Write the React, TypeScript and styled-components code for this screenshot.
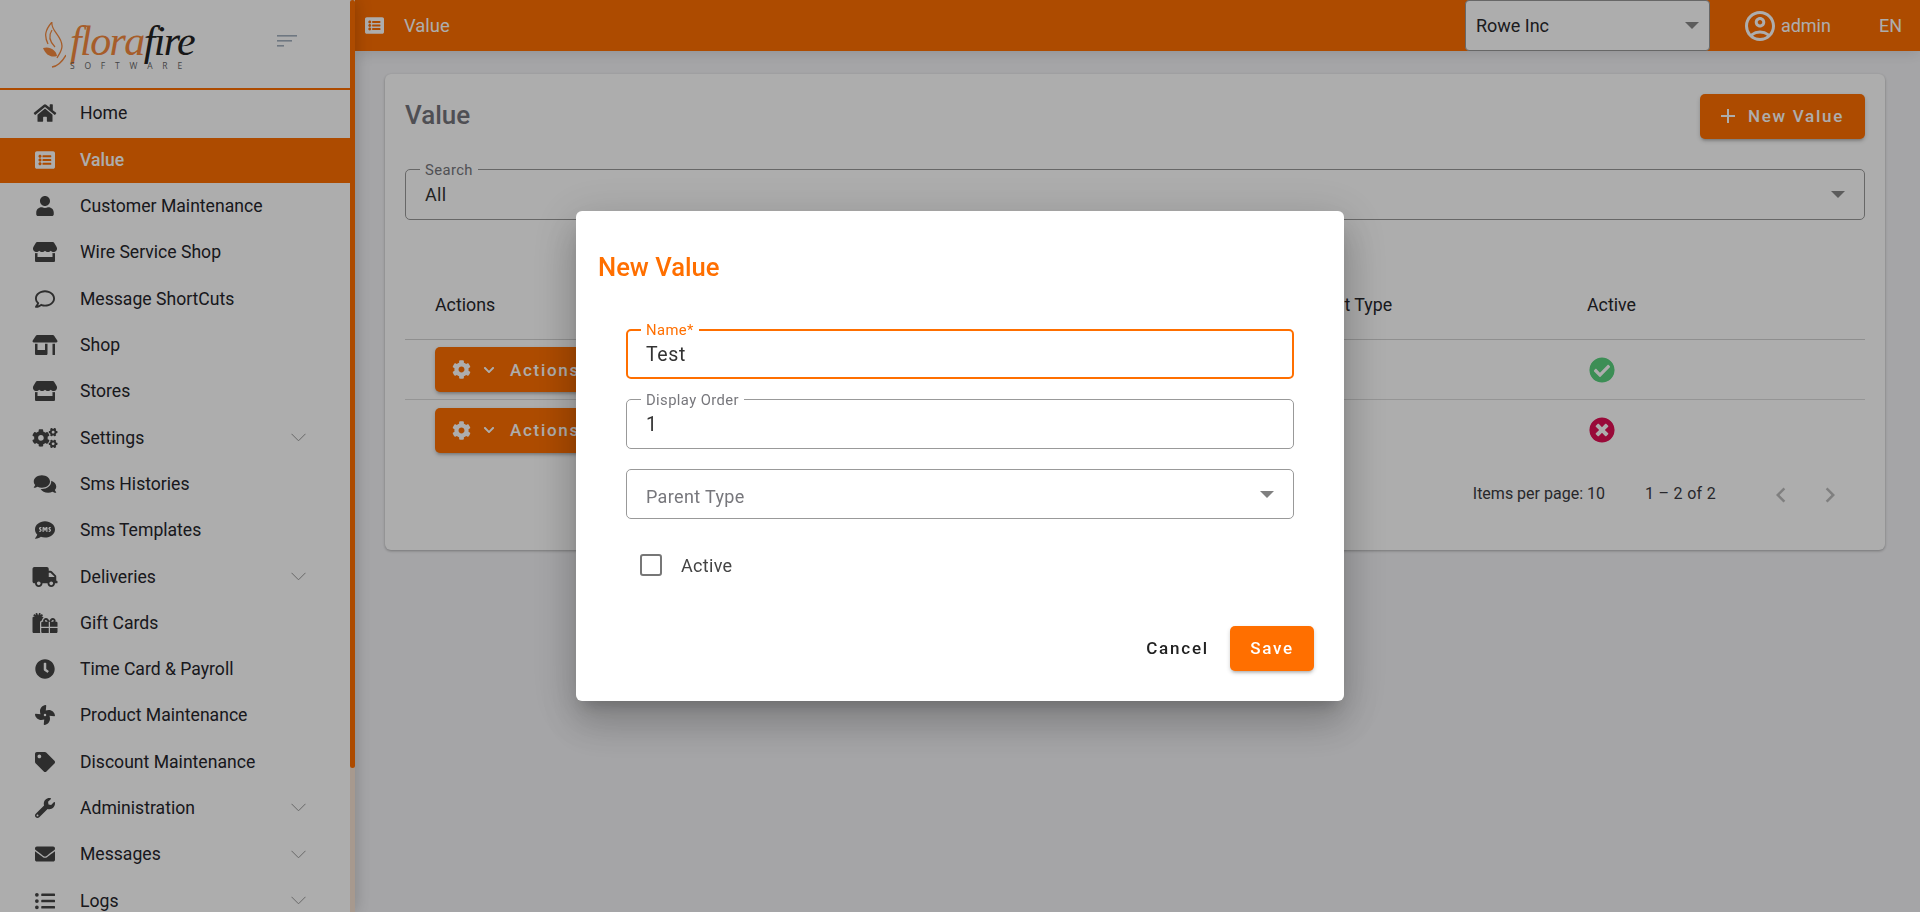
import React from 'react';
import styled, { createGlobalStyle } from 'styled-components';
import {
  FaHome,
  FaListAlt,
  FaUser,
  FaStore,
  FaRegComment,
  FaStoreAlt,
  FaCogs,
  FaComments,
  FaSms,
  FaTruck,
  FaGifts,
  FaClock,
  FaFan,
  FaTag,
  FaWrench,
  FaEnvelope,
  FaListUl,
  FaCog,
  FaChevronDown,
  FaCheckCircle,
  FaTimesCircle,
} from 'react-icons/fa';
import { MdAdd, MdOutlineAccountCircle, MdChevronLeft, MdChevronRight } from 'react-icons/md';

const ORANGE = '#ff6f00';

const GlobalStyle = createGlobalStyle`
  * { box-sizing: border-box; }
  html, body {
    margin: 0;
    height: 100%;
    overflow: hidden;
    font-family: Roboto, "Liberation Sans", sans-serif;
    color: #27272c;
  }
`;

const Shell = styled.div`
  display: flex;
  height: 100vh;
  background: #f4f4f7;
`;

const Sidebar = styled.aside`
  flex: 0 0 355px;
  height: 100%;
  display: flex;
  background: #fff;
  box-shadow: 0 0 16px rgb(0 0 0 / 22%);
  position: relative;
  z-index: 2;
`;

const SidePane = styled.div`
  flex: 0 0 350px;
  height: 100%;
  overflow: hidden;
`;

const ScrollRail = styled.div`
  flex: 0 0 5px;
  height: 100%;
  background: #f7e2d2;
`;

const ScrollThumb = styled.div`
  height: 768px;
  background: ${ORANGE};
  border-radius: 3px;
`;

const Brand = styled.div`
  height: 90px;
  border-bottom: 2px solid ${ORANGE};
  display: flex;
  align-items: flex-start;
  padding: 22px 53px 0 42px;
`;

const LogoText = styled.div`
  margin-left: 4px;
  display: flex;
  flex-direction: column;
  width: 125px;
`;

const LogoWord = styled.div`
  font-family: "Liberation Serif", serif;
  font-style: italic;
  font-size: 42px;
  line-height: 38px;
  letter-spacing: -1.6px;
  color: #f58a3e;
  white-space: nowrap;

  span {
    color: #222;
  }
`;

const LogoSub = styled.div`
  font-family: "Open Sans", sans-serif;
  font-size: 8.5px;
  line-height: 9px;
  letter-spacing: 9.8px;
  color: #666;
  margin-top: 1px;
  white-space: nowrap;
`;

const Burger = styled.svg`
  margin: 13px 0 0 auto;
  flex: none;
`;

const MenuRow = styled.div<{ $active?: boolean }>`
  display: flex;
  align-items: center;
  height: ${(p) => (p.$active ? '45px' : '46.3px')};
  margin-top: ${(p) => (p.$active ? '1.7px' : '0')};
  padding-right: 44px;
  background: ${(p) => (p.$active ? ORANGE : 'transparent')};
  color: ${(p) => (p.$active ? '#fff' : '#25252b')};
  font-size: 17.6px;
  font-weight: ${(p) => (p.$active ? 500 : 400)};
`;

const MenuIcon = styled.span<{ $active?: boolean }>`
  flex: 0 0 80px;
  display: flex;
  justify-content: center;
  padding-left: 10px;
  color: ${(p) => (p.$active ? '#fff' : '#444')};

  svg {
    width: 26px;
    height: 20px;
  }
`;

const MenuLabel = styled.span`
  flex: 1;
`;

const MenuChevron = styled.svg`
  flex: none;
`;

const Main = styled.div`
  flex: 1;
  min-width: 0;
  display: flex;
  flex-direction: column;
`;

const TopBar = styled.header`
  height: 51px;
  flex: none;
  display: flex;
  align-items: center;
  background: ${ORANGE};
  color: #fff;
  padding-left: 10px;
  box-shadow: 0 2px 14px rgb(0 0 0 / 12%);
`;

const TopTitle = styled.span`
  display: flex;
  align-items: center;
  gap: 20px;
  font-size: 18.4px;
  flex: 1;
  svg {
    font-size: 19px;
  }
`;

const CompanySelect = styled.div`
  flex: none;
  width: 245px;
  height: 51px;
  display: flex;
  align-items: center;
  justify-content: space-between;
  padding: 0 10px 0 10px;
  background: #fff;
  border: 1px solid #999;
  border-radius: 4px;
  color: #2a2a2e;
  font-size: 18px;
`;

const Caret = styled.span<{ $muted?: boolean }>`
  width: 0;
  height: 0;
  border-left: 7px solid transparent;
  border-right: 7px solid transparent;
  border-top: 7px solid ${(p) => (p.$muted ? '#808080' : '#888')};
`;

const UserBox = styled.div`
  display: flex;
  align-items: center;
  gap: 3px;
  margin-left: 32px;
  font-size: 18px;
  svg {
    font-size: 36px;
  }
`;

const Lang = styled.span`
  margin: 0 18px 0 48px;
  font-size: 18px;
`;

const Content = styled.main`
  padding: 23px 35px 0 30px;
`;

const Card = styled.section`
  height: 476px;
  padding: 20px;
  background: #fff;
  border-radius: 6px;
  box-shadow: 0 1px 3px rgb(0 0 0 / 30%);
`;

const CardHead = styled.div`
  display: flex;
  align-items: center;
  justify-content: space-between;
  height: 45px;
  margin-bottom: 30px;
`;

const CardTitle = styled.h2`
  margin: 0 0 4px;
  font-size: 26px;
  font-weight: 500;
  color: #75757c;
`;

const Raised = styled.button`
  display: flex;
  align-items: center;
  height: 45px;
  border: 0;
  border-radius: 5px;
  background: ${ORANGE};
  color: #fff;
  font-family: inherit;
  font-size: 17px;
  font-weight: 500;
  letter-spacing: 1.7px;
  white-space: nowrap;
  box-shadow: 0 3px 3px -2px rgb(0 0 0 / 20%), 0 2px 4px rgb(0 0 0 / 18%);
`;

const NewButton = styled(Raised)`
  width: 165px;
  padding: 0 0 2px 16px;
  gap: 8px;
  svg {
    font-size: 24px;
  }
`;

const ActionsButton = styled(Raised)`
  width: 170px;
  padding: 0 0 0 17px;
  svg:first-child {
    font-size: 19px;
  }
  svg:nth-child(2) {
    font-size: 12px;
    margin: 0 15px 0 12px;
  }
`;

const Field = styled.div<{ $focus?: boolean; $h?: number }>`
  position: relative;
  display: flex;
  align-items: center;
  justify-content: space-between;
  height: ${(p) => p.$h ?? 50}px;
  padding: 0 ${(p) => (p.$focus ? 18 : 19)}px;
  border: ${(p) => (p.$focus ? `2px solid ${ORANGE}` : '1px solid #999')};
  border-radius: 5px;
  background: #fff;
`;

const FieldLabel = styled.label<{ $focus?: boolean }>`
  position: absolute;
  top: ${(p) => (p.$focus ? -9 : -8)}px;
  left: ${(p) => (p.$focus ? 13 : 14)}px;
  padding: 0 5px;
  background: #fff;
  font-size: 14.8px;
  line-height: 16px;
  letter-spacing: 0.4px;
  color: ${(p) => (p.$focus ? ORANGE : '#77777c')};
`;

const FieldValue = styled.span<{ $lg?: boolean }>`
  font-size: ${(p) => (p.$lg ? '19.5px' : '18px')};
  letter-spacing: ${(p) => (p.$lg ? '0.6px' : '0.3px')};
  color: #333;
`;

const Placeholder = styled(FieldValue)`
  color: #77777c;
  padding-top: 4px;
  letter-spacing: 0.35px;
`;

const TableWrap = styled.div`
  margin-top: 50px;
`;

const TableRow = styled.div<{ $head?: boolean }>`
  display: grid;
  grid-template-columns: 345px 1fr 1fr 288.5px 278px;
  align-items: center;
  height: ${(p) => (p.$head ? '70px' : '60px')};
  border-bottom: 1px solid ${(p) => (p.$head ? '#d3d3d3' : '#dcdcdc')};
  font-size: 17.8px;
  color: #27272c;

  & > *:first-child {
    padding-left: 30px;
  }
`;

const NoBorderRow = styled(TableRow)`
  border-bottom: 0;
`;

const StatusCell = styled.span<{ $on?: boolean }>`
  display: flex;
  font-size: 26px;
  margin-left: 2px;
  color: ${(p) => (p.$on ? '#59d17e' : '#e20f55')};
  svg {
    background: radial-gradient(circle, #fff 50%, transparent 52%);
    border-radius: 50%;
  }
`;

const Pager = styled.div`
  display: flex;
  align-items: center;
  justify-content: flex-end;
  margin-top: -1.5px;
  padding-right: 20px;
  height: 70px;
  font-size: 16px;
  color: #3a3a40;
`;

const PagerCount = styled.span`
  margin: 0 50px 0 40px;
  letter-spacing: 0.3px;
`;

const PagerArrows = styled.span`
  display: flex;
  gap: 19px;
  font-size: 30px;
  color: #bcbcbc;
  padding-top: 2px;
`;

const Backdrop = styled.div`
  position: fixed;
  inset: 0;
  z-index: 10;
  display: flex;
  align-items: center;
  justify-content: center;
  background: rgb(0 0 0 / 32%);
`;

const Dialog = styled.div`
  width: 768px;
  height: 490px;
  padding: 0 24px;
  background: #fff;
  border-radius: 6px;
  box-shadow: 0 11px 15px -7px rgb(0 0 0 / 20%), 0 24px 38px 3px rgb(0 0 0 / 14%),
    0 9px 46px 8px rgb(0 0 0 / 12%);
  display: flex;
  flex-direction: column;
`;

const DialogTitle = styled.h2`
  margin: 0 0 0 -2px;
  padding-top: 40px;
  height: 118px;
  font-size: 25.6px;
  line-height: 32px;
  font-weight: 500;
  color: ${ORANGE};
`;

const FormBody = styled.div`
  display: flex;
  flex-direction: column;
  gap: 20px;
  padding: 0 26px;
`;

const CheckRow = styled.div`
  display: flex;
  align-items: center;
  margin: 3px 0 0 14px;
  height: 46px;
  font-size: 18px;
  letter-spacing: 0.3px;
  color: #444;
`;

const CheckBox = styled.span`
  width: 22px;
  height: 22px;
  margin-right: 19px;
  border: 2px solid #777;
  border-radius: 3px;
`;

const DialogActions = styled.div`
  margin-top: auto;
  padding: 0 6px 30px 0;
  display: flex;
  align-items: center;
  justify-content: flex-end;
  gap: 21px;
`;

const TextButton = styled.button`
  border: 0;
  background: none;
  padding: 0 0 2px;
  font-family: inherit;
  font-size: 17px;
  font-weight: 500;
  letter-spacing: 1.8px;
  color: #222;
`;

const SaveButton = styled(Raised)`
  width: 84px;
  padding: 0 0 2px;
  justify-content: center;
`;

const menu = [
  { label: 'Home', icon: FaHome },
  { label: 'Value', icon: FaListAlt, active: true },
  { label: 'Customer Maintenance', icon: FaUser },
  { label: 'Wire Service Shop', icon: FaStore },
  { label: 'Message ShortCuts', icon: FaRegComment },
  { label: 'Shop', icon: FaStoreAlt },
  { label: 'Stores', icon: FaStore },
  { label: 'Settings', icon: FaCogs, sub: true },
  { label: 'Sms Histories', icon: FaComments },
  { label: 'Sms Templates', icon: FaSms },
  { label: 'Deliveries', icon: FaTruck, sub: true },
  { label: 'Gift Cards', icon: FaGifts },
  { label: 'Time Card & Payroll', icon: FaClock },
  { label: 'Product Maintenance', icon: FaFan },
  { label: 'Discount Maintenance', icon: FaTag },
  { label: 'Administration', icon: FaWrench, sub: true },
  { label: 'Messages', icon: FaEnvelope, sub: true },
  { label: 'Logs', icon: FaListUl, sub: true },
];

const App: React.FC = () => {
  return (
    <>
      <GlobalStyle />
      <Shell>
        <Sidebar>
          <SidePane>
            <Brand>
              <svg width="24" height="46" viewBox="0 0 24 46" fill="none" xmlns="http://www.w3.org/2000/svg">
                <path d="M10 0C3 8 2 14 6 22M10 0C8 8 20 14 20 24c0 5-3 8-5 12" stroke="#f58a3e" strokeWidth="1.3" />
                <path d="M10 8C6 14 8 20 13 25" stroke="#f58a3e" strokeWidth="1.2" />
                <path d="M1 26c7-2 13 2 14 8-6 2-11-1-14-8z" fill="#f58a3e" />
                <path d="M24 33c-4 7-8 11-14 12" stroke="#f58a3e" strokeWidth="1.4" />
              </svg>
              <LogoText>
                <LogoWord>
                  flora<span>fire</span>
                </LogoWord>
                <LogoSub>SOFTWARE</LogoSub>
              </LogoText>
              <Burger width="20" height="12" viewBox="0 0 20 12" xmlns="http://www.w3.org/2000/svg">
                <rect y="0" width="20" height="1.6" fill="#a3b0bf" />
                <rect y="5" width="15" height="1.6" fill="#a3b0bf" />
                <rect y="10" width="7" height="1.6" fill="#a3b0bf" />
              </Burger>
            </Brand>
            <nav>
              {menu.map(({ label, icon: Icon, active, sub }) => (
                <MenuRow key={label} $active={active}>
                  <MenuIcon $active={active}>
                    <Icon />
                  </MenuIcon>
                  <MenuLabel>{label}</MenuLabel>
                  {sub && (
                    <MenuChevron width="15" height="9" viewBox="0 0 15 9" fill="none">
                      <path d="M.5.8l7 7 7-7" stroke="#999" strokeWidth="1" />
                    </MenuChevron>
                  )}
                </MenuRow>
              ))}
            </nav>
          </SidePane>
          <ScrollRail>
            <ScrollThumb />
          </ScrollRail>
        </Sidebar>

        <Main>
          <TopBar>
            <TopTitle>
              <FaListAlt />
              Value
            </TopTitle>
            <CompanySelect>
              Rowe Inc
              <Caret />
            </CompanySelect>
            <UserBox>
              <MdOutlineAccountCircle />
              admin
            </UserBox>
            <Lang>EN</Lang>
          </TopBar>

          <Content>
            <Card>
              <CardHead>
                <CardTitle>Value</CardTitle>
                <NewButton>
                  <MdAdd />
                  New Value
                </NewButton>
              </CardHead>
              <Field $h={51}>
                <FieldLabel>Search</FieldLabel>
                <FieldValue>All</FieldValue>
                <Caret />
              </Field>
              <TableWrap>
                <TableRow $head>
                  <span>Actions</span>
                  <span>Name</span>
                  <span>Display Order</span>
                  <span>Parent Type</span>
                  <span>Active</span>
                </TableRow>
                <TableRow>
                  <div>
                    <ActionsButton>
                      <FaCog />
                      <FaChevronDown />
                      Actions
                    </ActionsButton>
                  </div>
                  <span />
                  <span />
                  <span />
                  <StatusCell $on>
                    <FaCheckCircle />
                  </StatusCell>
                </TableRow>
                <NoBorderRow>
                  <div>
                    <ActionsButton>
                      <FaCog />
                      <FaChevronDown />
                      Actions
                    </ActionsButton>
                  </div>
                  <span />
                  <span />
                  <span />
                  <StatusCell>
                    <FaTimesCircle />
                  </StatusCell>
                </NoBorderRow>
                <Pager>
                  Items per page: 10
                  <PagerCount>1 – 2 of 2</PagerCount>
                  <PagerArrows>
                    <MdChevronLeft />
                    <MdChevronRight />
                  </PagerArrows>
                </Pager>
              </TableWrap>
            </Card>
          </Content>
        </Main>
      </Shell>

      <Backdrop>
        <Dialog>
          <DialogTitle>New Value</DialogTitle>
          <FormBody>
            <Field $focus>
              <FieldLabel $focus>Name*</FieldLabel>
              <FieldValue $lg>Test</FieldValue>
            </Field>
            <Field>
              <FieldLabel>Display Order</FieldLabel>
              <FieldValue $lg>1</FieldValue>
            </Field>
            <Field>
              <Placeholder>Parent Type</Placeholder>
              <Caret $muted />
            </Field>
            <CheckRow>
              <CheckBox />
              Active
            </CheckRow>
          </FormBody>
          <DialogActions>
            <TextButton>Cancel</TextButton>
            <SaveButton>Save</SaveButton>
          </DialogActions>
        </Dialog>
      </Backdrop>
    </>
  );
};

export default App;
